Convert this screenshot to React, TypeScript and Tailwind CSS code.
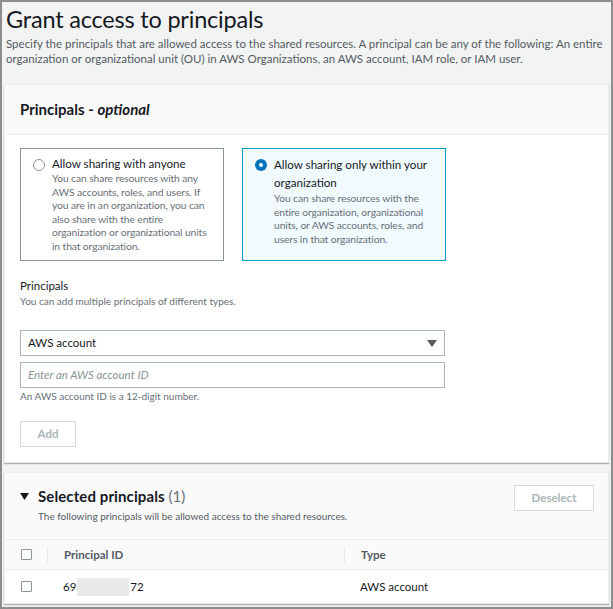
import React from "react";

const font = { fontFamily: "Lato, 'Noto Sans', sans-serif" };

function Radio({ checked }: { checked: boolean }) {
  return checked ? (
    <span className="mt-[3px] flex h-[12px] w-[12px] shrink-0 items-center justify-center rounded-full bg-[#0073bb]">
      <span className="h-[4px] w-[4px] rounded-full bg-white" />
    </span>
  ) : (
    <span className="mt-[3px] h-[12px] w-[12px] shrink-0 rounded-full border border-[#879596] bg-white" />
  );
}

function Checkbox() {
  return <span className="block h-[11px] w-[11px] rounded-[1px] border border-[#879596] bg-white" />;
}

export default function App() {
  return (
    <div
      className="relative h-[609px] w-[613px] overflow-hidden border-2 border-[#8d8d8d] bg-[#f2f3f3] text-[#16191f]"
      style={font}
    >
      <div className="px-[4px] pt-[1px]">
        <h1 className="text-[23.5px] leading-[32px] font-normal tracking-[-0.2px]">Grant access to principals</h1>
        <p className="mt-[1px] text-[11.5px] leading-[15px] text-[#545b64]">
          Specify the principals that are allowed access to the shared resources. A principal can be any of the
          following: An entire organization or organizational unit (OU) in AWS Organizations, an AWS account, IAM role,
          or IAM user.
        </p>
      </div>

      <div className="mx-[2px] mt-[18px] border border-[#eaeded] bg-white shadow-[0_1px_1px_0_rgba(0,28,36,0.3)]">
        <div className="flex h-[50px] items-center border-b border-[#eaeded] bg-[#fafafa] px-[15px]">
          <span className="text-[15px] font-bold">
            Principals - <i>optional</i>
          </span>
        </div>
        <div className="px-[15px] pb-[15px] pt-[13px]">
          <div className="flex gap-[18px]">
            <div className="flex h-[113px] w-[204px] gap-[7px] border border-[#879596] bg-white px-[12px] pt-[7px]">
              <Radio checked={false} />
              <div>
                <div className="text-[11.6px] leading-[16px]">Allow sharing with anyone</div>
                <div className="text-[10.3px] leading-[13.5px] tracking-[-0.1px] text-[#687078]">
                  You can share resources with any AWS accounts, roles, and users. If you are in an organization, you can
                  also share with the entire organization or organizational units in that organization.
                </div>
              </div>
            </div>
            <div className="flex h-[113px] w-[204px] gap-[7px] border border-[#00a1c9] bg-[#f1faff] px-[12px] pt-[7px]">
              <Radio checked={true} />
              <div>
                <div className="text-[11.6px] leading-[18px]">Allow sharing only within your organization</div>
                <div className="text-[10.3px] leading-[13.5px] tracking-[-0.1px] text-[#687078]">
                  You can share resources with the entire organization, organizational units, or AWS accounts, roles, and
                  users in that organization.
                </div>
              </div>
            </div>
          </div>

          <div className="mt-[17px] text-[11.5px] leading-[16px]">Principals</div>
          <div className="text-[10px] leading-[14px] text-[#687078]">You can add multiple principals of different types.</div>

          <div className="mt-[22px] flex h-[26px] w-[425px] items-center justify-between border border-[#aab7b8] bg-white pl-[7px] pr-[7px]">
            <span className="text-[11.5px]">AWS account</span>
            <svg width="10" height="7" viewBox="0 0 10 7">
              <path d="M0 0 L10 0 L5 7 Z" fill="#545b64" />
            </svg>
          </div>
          <div className="mt-[6px] flex h-[26px] w-[425px] items-center border border-[#aab7b8] bg-white pl-[7px]">
            <span className="text-[11.5px] italic text-[#879596]">Enter an AWS account ID</span>
          </div>
          <div className="mt-[1px] text-[10px] leading-[14px] text-[#687078]">An AWS account ID is a 12-digit number.</div>

          <div className="mt-[18px] flex h-[26px] w-[56px] items-center justify-center border border-[#d5dbdb] bg-white text-[11.5px] font-bold text-[#aab7b8]">
            Add
          </div>
        </div>
      </div>

      <div className="mx-[2px] mt-[9px] border border-[#eaeded] bg-white shadow-[0_1px_1px_0_rgba(0,28,36,0.3)]">
        <div className="flex h-[67px] items-start justify-between border-b border-[#eaeded] bg-[#fafafa] pl-[15px] pr-[14px] pt-[12px]">
          <div>
            <div className="flex items-center gap-[9px]">
              <svg width="9" height="7" viewBox="0 0 9 7">
                <path d="M0 0 L9 0 L4.5 7 Z" fill="#16191f" />
              </svg>
              <span className="text-[15px] font-bold leading-[22px] tracking-[0.1px]">
                Selected principals <span className="font-normal text-[#687078]">(1)</span>
              </span>
            </div>
            <div className="ml-[18px] mt-[2px] text-[10px] leading-[14px] text-[#545b64]">
              The following principals will be allowed access to the shared resources.
            </div>
          </div>
          <div className="flex h-[26px] w-[80px] items-center justify-center border border-[#d5dbdb] bg-white text-[11.5px] font-bold text-[#aab7b8]">
            Deselect
          </div>
        </div>
        <div className="flex h-[30px] items-center border-b border-[#eaeded] bg-[#fafafa] text-[11.5px] font-bold text-[#545b64]">
          <div className="flex w-[42px] justify-center pl-[1px]">
            <Checkbox />
          </div>
          <div className="h-[16px] w-px bg-[#eaeded]" />
          <div className="w-[296px] pl-[16px]">Principal ID</div>
          <div className="h-[16px] w-px bg-[#eaeded]" />
          <div className="pl-[16px]">Type</div>
        </div>
        <div className="flex h-[33px] items-center text-[11.5px]">
          <div className="flex w-[42px] justify-center pl-[1px]">
            <Checkbox />
          </div>
          <div className="flex w-[297px] items-center pl-[16px]">
            <span>69</span>
            <span className="mx-[1px] h-[18px] w-[52px] bg-[#e9e9e9]" />
            <span>72</span>
          </div>
          <div className="pl-[16px]">AWS account</div>
        </div>
      </div>
    </div>
  );
}
